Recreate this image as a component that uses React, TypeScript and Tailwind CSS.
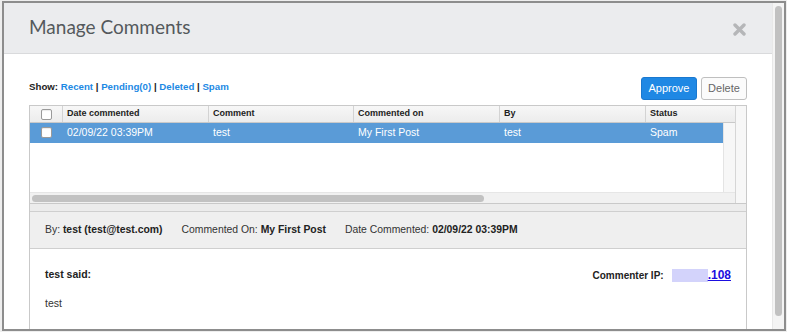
import React from "react";

const cols = [
  { label: "Date commented", w: "w-[146px]" },
  { label: "Comment", w: "w-[145px]" },
  { label: "Commented on", w: "w-[146px]" },
  { label: "By", w: "w-[146px]" },
];

function Checkbox() {
  return (
    <div className="w-[11px] h-[11px] rounded-[2px] border border-[#9a9a9a] bg-white shadow-[inset_0_1px_1px_rgba(0,0,0,0.08)]" />
  );
}

export default function App() {
  return (
    <div className="w-[787px] h-[332px] bg-[#eeeeee] pt-[1px] pl-[2px] pr-[1px] font-['Liberation_Sans',Arial,sans-serif] text-[#333]">
      <div className="h-[330px] border-2 border-[#8d8d8d] bg-white flex">
        {/* modal */}
        <div className="flex-1 flex flex-col min-w-0">
          <header className="h-[51px] shrink-0 bg-[#ebecee] border-b border-[#d9dadc] flex items-center justify-between pl-[25px] pr-[26px]">
            <h1 className="text-[19px] leading-none text-[#54595c] font-['Lato',sans-serif] pb-[3px]">
              Manage Comments
            </h1>
            <svg width="13" height="13" viewBox="0 0 13 13" className="mt-[3px]">
              <path d="M2 2 L11 11 M11 2 L2 11" stroke="#b5b6b8" strokeWidth="3.4" strokeLinecap="round" />
            </svg>
          </header>

          <div className="flex-1 flex flex-col px-[25px] min-h-0">
            {/* toolbar */}
            <div className="mt-[23px] h-[23px] flex items-center justify-between">
              <div className="text-[9.7px] font-bold text-[#222] -mt-[2px]">
                Show: <a className="text-[#1c89e4]">Recent</a> | <a className="text-[#1c89e4]">Pending(0)</a> | <a className="text-[#1c89e4]">Deleted</a> | <a className="text-[#1c89e4]">Spam</a>
              </div>
              <div className="flex gap-[4px]">
                <button className="h-[23px] w-[56px] rounded-[3px] bg-[#1f88e4] border border-[#1a78cf] text-white text-[11px]">
                  Approve
                </button>
                <button className="h-[23px] w-[46px] rounded-[3px] bg-[#fbfbfb] border border-[#bfbfbf] text-[#666] text-[11px]">
                  Delete
                </button>
              </div>
            </div>

            {/* grid */}
            <div className="mt-[5px] h-[99px] shrink-0 border border-[#c9c9c9] flex">
              <div className="w-[705px] flex flex-col">
                <div className="h-[17px] flex border-b border-[#c9c9c9] bg-gradient-to-b from-[#f7f7f7] to-[#ececec] text-[9px] font-bold text-[#222]">
                  <div className="w-[33px] border-r border-[#d3d3d3] flex items-center justify-center">
                    <Checkbox />
                  </div>
                  {cols.map((c) => (
                    <div key={c.label} className={`${c.w} border-r border-[#d3d3d3] flex items-center pl-[4px]`}>
                      {c.label}
                    </div>
                  ))}
                  <div className="flex-1 flex items-center pl-[4px]">Status</div>
                </div>
                <div className="h-[69px] flex">
                  <div className="flex-1">
                    <div className="h-[20px] flex bg-[#5a9bd7] text-white text-[10.5px]">
                      <div className="w-[33px] flex items-center justify-center -mt-[2px]">
                        <Checkbox />
                      </div>
                      <div className="w-[146px] flex items-center pl-[4px]">02/09/22 03:39PM</div>
                      <div className="w-[145px] flex items-center pl-[4px]">test</div>
                      <div className="w-[146px] flex items-center pl-[4px]">My First Post</div>
                      <div className="w-[146px] flex items-center pl-[4px]">test</div>
                      <div className="flex-1 flex items-center pl-[4px]">Spam</div>
                    </div>
                  </div>
                  <div className="w-[12px] border-l border-[#e4e4e4] bg-[#f7f7f7]" />
                </div>
                <div className="h-[11px] bg-[#f1f1f1] border-t border-[#e6e6e6] flex items-center pl-[2px]">
                  <div className="w-[452px] h-[7px] rounded-full bg-[#c2c2c2]" />
                </div>
              </div>
              <div className="flex-1 border-l border-[#d6d6d6] bg-[#f7f7f7]" />
            </div>

            {/* detail */}
            <div className="flex-1 flex flex-col border-x border-[#c9c9c9]">
              <div className="h-[8px] shrink-0 bg-[#ececec] border-b border-[#cfcfcf]" />
              <div className="h-[37px] shrink-0 bg-[#efefef] border-b border-[#cfcfcf] flex items-center gap-[19px] pl-[15px] text-[10.4px] text-[#333]">
                <span>
                  By: <b className="text-[#222]">test (test@test.com)</b>
                </span>
                <span>
                  Commented On: <b className="text-[#222]">My First Post</b>
                </span>
                <span>
                  Date Commented: <b className="text-[#222]">02/09/22 03:39PM</b>
                </span>
              </div>
              <div className="flex-1 px-[15px] pt-[17px] text-[10.5px]">
                <div className="flex items-center justify-between">
                  <b className="text-[#222]">test said:</b>
                  <div className="flex items-center text-[10px] font-bold text-[#222]">
                    Commenter IP:
                    <span className="ml-[8px] inline-block w-[36px] h-[13px] bg-[#d3d3fb]" />
                    <a className="text-[#1b0ee0] underline text-[12px]">.108</a>
                  </div>
                </div>
                <p className="mt-[12px] text-[#333]">test</p>
              </div>
            </div>
          </div>
        </div>

        {/* page scrollbar */}
        <div className="w-[12px] shrink-0 bg-[#f4f4f4] border-l border-[#e8e8e8] pt-[3px] pl-[2px]">
          <div className="w-[7px] h-[310px] rounded-full bg-[#c1c1c1]" />
        </div>
      </div>
    </div>
  );
}
